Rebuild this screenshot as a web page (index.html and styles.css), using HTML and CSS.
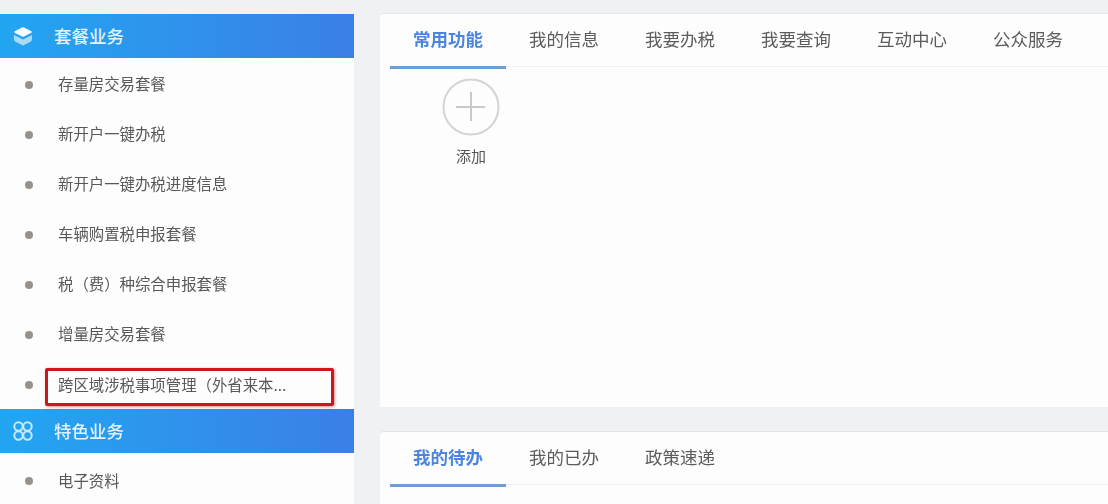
FILE: index.html
```html
<!DOCTYPE html>
<html lang="zh-CN">
<head>
  <meta charset="UTF-8">
  <title>套餐业务</title>
  <link rel="stylesheet" href="styles.css">
</head>
<body>
  <div class="page">
    <div class="sidebar">
      <div class="group-title">
        <svg class="group-icon" width="26" height="24" viewBox="0 0 26 24">
          <path d="M4 11 L13 15.5 L22 11 Q22.5 16 21 17.5 L13 21.5 L5 17.5 Q3.5 16 4 11 Z" fill="#a9dbf9"/>
          <path d="M12 3.4 Q13 3 14 3.4 L21.4 7.2 Q22.4 8 21.4 8.8 L14 12.6 Q13 13 12 12.6 L4.6 8.8 Q3.6 8 4.6 7.2 Z" fill="#f4fbff"/>
        </svg>
        <span>套餐业务</span>
      </div>
      <div class="item"><i class="dot"></i><span class="item-text">存量房交易套餐</span></div>
      <div class="item"><i class="dot"></i><span class="item-text">新开户一键办税</span></div>
      <div class="item"><i class="dot"></i><span class="item-text">新开户一键办税进度信息</span></div>
      <div class="item"><i class="dot"></i><span class="item-text">车辆购置税申报套餐</span></div>
      <div class="item"><i class="dot"></i><span class="item-text">税（费）种综合申报套餐</span></div>
      <div class="item"><i class="dot"></i><span class="item-text">增量房交易套餐</span></div>
      <div class="item item-marked">
        <i class="dot"></i><span class="item-text">跨区域涉税事项管理（外省来本...</span>
        <div class="red-box"></div>
      </div>
      <div class="group-title">
        <svg class="group-icon" width="26" height="24" viewBox="0 0 26 24" fill="none" stroke="#c9e8fc" stroke-width="2">
          <circle cx="8.5" cy="7.5" r="4.2"/>
          <circle cx="17.5" cy="7.5" r="4.2"/>
          <circle cx="8.5" cy="16.5" r="4.2"/>
          <circle cx="17.5" cy="16.5" r="4.2"/>
        </svg>
        <span>特色业务</span>
      </div>
      <div class="item item-last"><i class="dot"></i><span class="item-text">电子资料</span></div>
    </div>

    <div class="main">
      <div class="panel panel-top">
        <div class="tabs">
          <div class="tab active">常用功能</div>
          <div class="tab">我的信息</div>
          <div class="tab">我要办税</div>
          <div class="tab">我要查询</div>
          <div class="tab">互动中心</div>
          <div class="tab">公众服务</div>
        </div>
        <div class="add">
          <svg width="58" height="58" viewBox="0 0 58 58" fill="none">
            <circle cx="29" cy="29" r="27.5" stroke="#d6d3d1" stroke-width="2"/>
            <path d="M29 14 V43 M14 29 H43" stroke="#c9c9cb" stroke-width="2"/>
          </svg>
          <span>添加</span>
        </div>
      </div>
      <div class="panel panel-bottom">
        <div class="tabs">
          <div class="tab active">我的待办</div>
          <div class="tab">我的已办</div>
          <div class="tab">政策速递</div>
        </div>
      </div>
    </div>
  </div>
</body>
</html>
```

FILE: styles.css
```css
* {
  margin: 0;
  padding: 0;
  box-sizing: border-box;
}
html, body {
  height: 504px;
  overflow: hidden;
}
body {
  background: #f0f1f4;
  font-family: "Noto Sans CJK SC", "Liberation Sans", sans-serif;
  color: #555555;
}
.page {
  display: flex;
  align-items: flex-start;
  gap: 26px;
  padding-top: 14px;
  filter: blur(0.35px);
}

/* left menu */
.sidebar {
  width: 354px;
  flex: none;
  background: #fdfdfe;
}
.group-title {
  height: 44px;
  display: flex;
  align-items: center;
  padding-left: 10px;
  background: linear-gradient(to right, #22a6f1, #3b7fe6);
  color: #e2f3fd;
  font-size: 17.5px;
  font-weight: 500;
}
.group-title span {
  margin-bottom: 2px;
}
.group-icon {
  margin-right: 18px;
  flex: none;
}
.item {
  height: 50px;
  display: flex;
  align-items: center;
  padding-left: 25px;
  position: relative;
  font-size: 15.4px;
  color: #585858;
}
.item-marked {
  height: 51px;
}
.item-last {
  height: 53px;
}
.dot {
  width: 8px;
  height: 8px;
  border-radius: 50%;
  background: #97918b;
  margin: 3px 25px 0 0;
  flex: none;
}
.red-box {
  position: absolute;
  left: 45px;
  top: 10px;
  width: 289px;
  height: 38px;
  border: 3px solid #c8191c;
  border-radius: 2px;
  box-shadow: 1px 1px 3px rgba(160, 40, 40, 0.5);
}

/* right side */
.main {
  flex: 1;
  display: flex;
  flex-direction: column;
  gap: 24px;
  margin-top: -1px;
}
.panel {
  background: #fdfdfe;
  border-top: 1px solid #e4e5e8;
  border-radius: 4px 0 0 0;
  padding: 0 0 0 10px;
}
.panel-top {
  height: 394px;
}
.panel-bottom {
  height: 80px;
}
.tabs {
  display: flex;
  height: 53px;
  border-bottom: 1px solid #f0f1f3;
}
.tab {
  width: 116px;
  height: 55px;
  line-height: 49px;
  text-align: center;
  font-size: 17.5px;
  color: #5c5c5c;
}
.tab.active {
  color: #4a85e0;
  font-weight: 700;
  border-bottom: 3px solid #6d9ed6;
}
.add {
  width: 116px;
  margin-left: 23px;
  margin-top: 11px;
  display: flex;
  flex-direction: column;
  align-items: center;
  gap: 9px;
  font-size: 15px;
  color: #555555;
}
```
